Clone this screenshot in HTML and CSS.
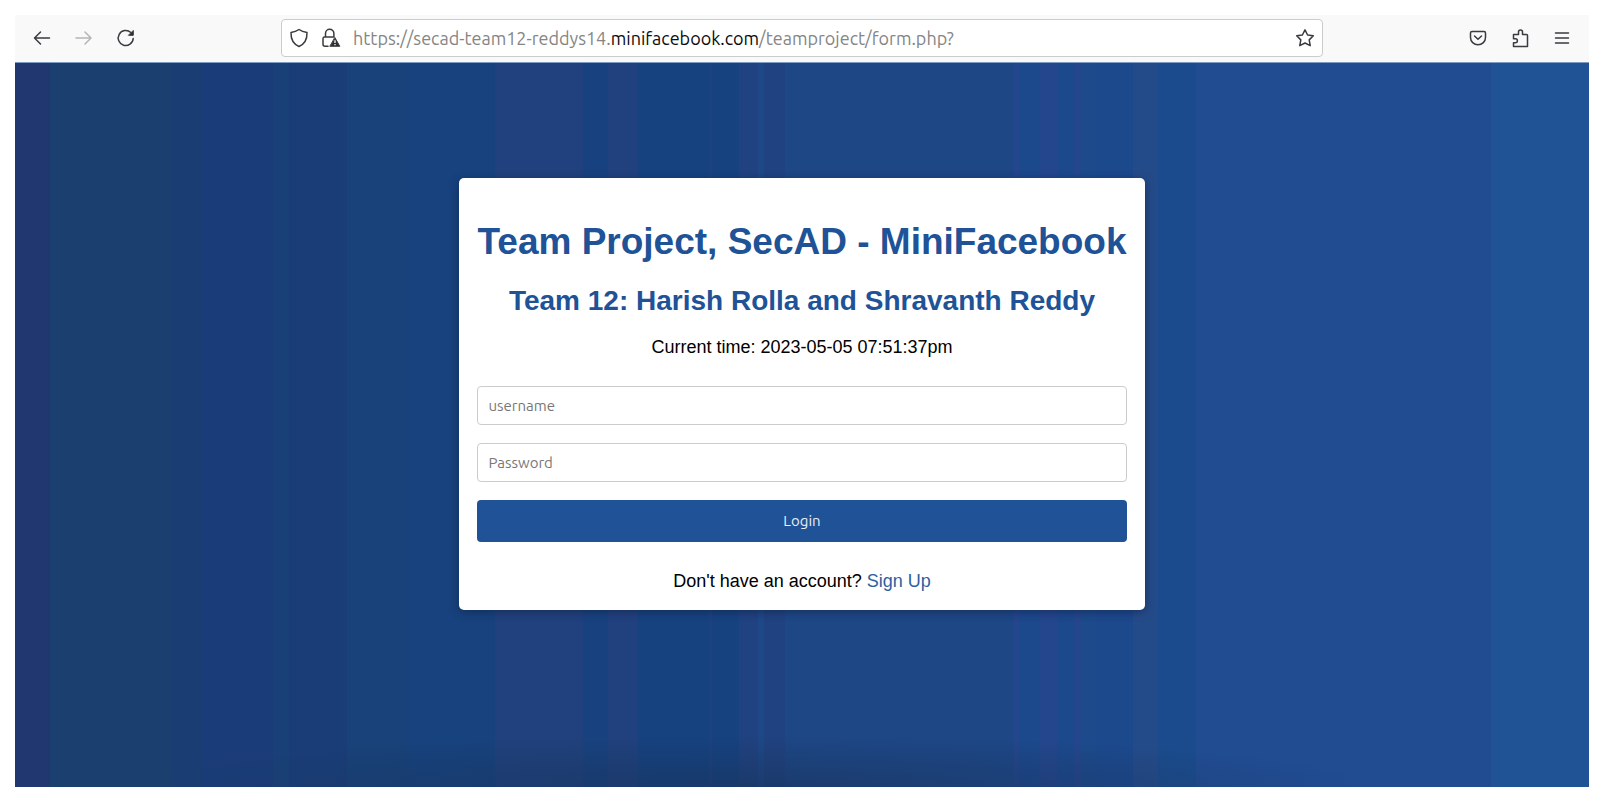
FILE: index.html
```html
<!DOCTYPE html>
<html lang="en">
<head>
<meta charset="utf-8">
<title>MiniFacebook</title>
<link rel="stylesheet" href="styles.css">
</head>
<body>
<div class="browser">
  <header class="toolbar">
    <nav class="nav">
      <button class="tool" aria-label="Back"><svg width="20" height="20" viewBox="0 0 20 20"><path d="M17.500 10H2.500M8.500 4L2.500 10L8.500 16"/></svg></button>
      <button class="tool" aria-label="Forward" disabled><svg width="20" height="20" viewBox="0 0 20 20"><path d="M2 10H17M11 4L17 10L11 16"/></svg></button>
      <button class="tool" aria-label="Reload"><svg width="20" height="20" viewBox="0 0 20 20"><path d="M17.200 10.500A7.500 7.500 0 1 1 14.800 4.500"/><path class="solid" d="M17.300 2.800V7.300H12.800Z"/></svg></button>
    </nav>
    <div class="address">
      <svg width="20" height="20" viewBox="0 0 20 20"><path d="M10 1.500C7.500 3.200 5 4 2 4.500C1.800 11 3.800 15.800 10 18.500C16.200 15.800 18.200 11 18 4.500C15 4 12.500 3.200 10 1.500Z"/></svg>
      <svg width="20" height="20" viewBox="0 0 20 20"><path d="M4.500 9V5.500a4.200 4.200 0 0 1 8.400 0V9M7 18.300H4a2 2 0 0 1-2-2V10.500A1.600 1.600 0 0 1 3.600 9H12.500"/><path class="solid" d="M14 9.800L18.800 18.300H9.200Z"/><path class="mark" d="M14 12.300V15M14 16V17.300"/></svg>
      <p class="url">https://secad-team12-reddys14.<span class="host">minifacebook.com</span>/teamproject/form.php?</p>
      <button class="tool" aria-label="Bookmark"><svg width="20" height="20" viewBox="0 0 20 20"><path d="M10 1.800L12.600 7L18.300 7.800L14.200 11.900L15.200 17.700L10 15L4.800 17.700L5.800 11.900L1.700 7.800L7.400 7Z"/></svg></button>
    </div>
    <div class="actions">
      <button class="tool" aria-label="Pocket"><svg width="20" height="20" viewBox="0 0 20 20"><path d="M4 3.500H16A1.500 1.500 0 0 1 17.500 5V9.500A7.500 7.200 0 0 1 2.500 9.500V5A1.500 1.500 0 0 1 4 3.500ZM6.500 8L10 11.300L13.500 8"/></svg></button>
      <button class="tool" aria-label="Extensions"><svg width="20" height="20" viewBox="0 0 20 20"><path d="M3.500 18.500V14.700H5.400A2 2 0 0 0 5.400 10.700H3.500V6.500H8.500V4A2 2 0 0 1 12.500 4V6.500H16.500A1 1 0 0 1 17.500 7.500V18.500Z"/></svg></button>
      <button class="tool" aria-label="Menu"><svg width="20" height="20" viewBox="0 0 20 20"><path d="M3.500 5H16.500M3.500 10H16.500M3.500 15H16.500"/></svg></button>
    </div>
  </header>
  <main class="page">
    <section class="card">
      <h1>Team Project, SecAD - MiniFacebook</h1>
      <h2>Team 12: Harish Rolla and Shravanth Reddy</h2>
      <p class="time">Current time: 2023-05-05 07:51:37pm</p>
      <form class="form">
        <input type="text" placeholder="username" aria-label="username">
        <input type="password" placeholder="Password" aria-label="Password">
        <button class="login" type="button">Login</button>
      </form>
      <p class="signup">Don't have an account? <a href="#">Sign Up</a></p>
    </section>
  </main>
</div>
</body>
</html>
```
FILE: styles.css
```css
* { box-sizing: border-box; }

body {
  margin: 0;
  padding: 15px 13px 15px 15px;
  min-height: 100vh;
  display: flex;
  background: #fff;
  font-family: "Liberation Sans", Arial, sans-serif;
}

h1, h2, p { margin: 0; }

.browser {
  flex: 1;
  display: flex;
  flex-direction: column;
}

.toolbar {
  display: grid;
  grid-template-columns: 266px 1fr 266px;
  align-items: center;
  padding: 4px 0 5px;
  background: #f9f9fa;
  border-bottom: 1px solid #7f9cc4;
}

.nav, .actions {
  display: flex;
  gap: 22px;
  padding: 0 17px;
}

.actions { justify-content: flex-end; }

.tool {
  display: flex;
  padding: 0;
  border: 0;
  background: none;
}

.tool:disabled { opacity: 0.35; }

svg {
  display: block;
  fill: none;
  stroke: #3a3a3f;
  stroke-width: 1.5;
  stroke-linecap: round;
  stroke-linejoin: round;
}

.solid { fill: #2e2e33; stroke-width: 1; }
.mark { stroke: #fff; stroke-width: 1.3; stroke-linecap: butt; }

.address {
  display: flex;
  align-items: center;
  gap: 12px;
  height: 38px;
  padding: 0 7px;
  background: #fff;
  border: 1px solid #ccc;
  border-radius: 4px;
}

.url {
  flex: 1;
  color: #858585;
  font: 18px/24px Ubuntu, "Noto Sans", sans-serif;
}

.host { color: #0c0c0d; }

.page {
  flex: 1;
  display: flex;
  align-items: flex-start;
  justify-content: center;
  padding: 115px 16px 24px;
  background:
    radial-gradient(ellipse 41% 52px at 46% 100%, rgba(24, 52, 95, 0.65), rgba(24, 52, 95, 0)),
    linear-gradient(90deg,
      #20386f 0 2.2%, #1b4070 2.2% 9.9%, #1a3e74 9.9% 11.8%,
      #1a3c78 11.8% 16.4%, #194178 16.4% 17.4%, #1a3d78 17.4% 21.1%,
      #184279 21.1% 25.1%, #17427d 25.1% 30.5%, #20417d 30.5% 36.1%,
      #18427f 36.1% 37.7%, #20417e 37.7% 39.6%, #164280 39.6% 44.1%,
      #20417e 44.1% 44.3%, #164280 44.3% 46%, #204280 46% 47.2%,
      #1e4888 47.2% 47.6%, #204280 47.6% 48.9%, #1e4786 48.9% 63.5%,
      #24468c 63.5% 63.8%, #1c488c 63.8% 65.1%, #24468c 65.1% 66.2%,
      #1c488c 66.2% 67.3%, #24468c 67.3% 67.8%, #1c4a8a 67.8% 68.7%,
      #1c488c 68.7% 71%, #244b89 71% 72.6%, #1b4b8c 72.6% 75%,
      #214c92 75% 93.8%, #205296 93.8%);
}

.card {
  padding: 40px 18px 18px;
  background: #fff;
  border-radius: 5px;
  box-shadow: 0 2px 8px rgba(15, 25, 60, 0.5);
  text-align: center;
}

h1 {
  color: #205297;
  font-size: 37px;
  line-height: 48px;
}

h2 {
  margin-top: 18px;
  color: #205297;
  font-size: 28px;
  line-height: 34px;
}

.time {
  margin-top: 18px;
  font-size: 18px;
  line-height: 22px;
}

.form {
  display: flex;
  flex-direction: column;
  gap: 18px;
  margin: 28px 0;
}

.form input, .login {
  width: 100%;
  border-radius: 4px;
  font: 15px/20px Ubuntu, "Noto Sans", sans-serif;
}

.form input {
  height: 39px;
  padding: 0 10px;
  border: 1px solid #ccc;
  background: #fff;
}

.form input::placeholder { color: #777; opacity: 1; }

.login {
  height: 42px;
  border: 0;
  background: #205297;
  color: #e9eef5;
}

.signup {
  font-size: 18px;
  line-height: 22px;
}

.signup a {
  color: #2f5f9f;
  text-decoration: none;
}
```
